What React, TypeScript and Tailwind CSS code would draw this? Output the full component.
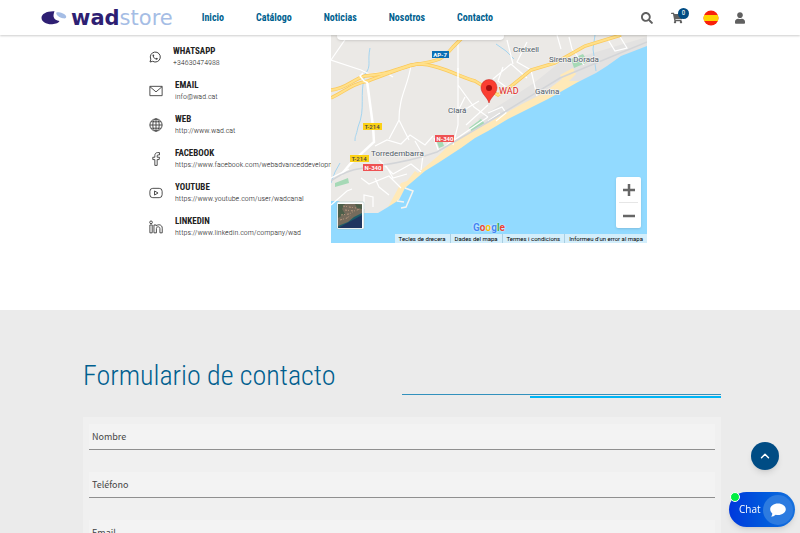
import type { ReactNode } from "react";
import { FaSearch, FaShoppingCart, FaUser } from "react-icons/fa";
import { ChevronUp } from "lucide-react";

const navLinks = ["Inicio", "Catálogo", "Noticias", "Nosotros", "Contacto"];

const fields = [
  { id: "nombre", label: "Nombre", type: "text" },
  { id: "telefono", label: "Teléfono", type: "tel" },
  { id: "email", label: "Email", type: "email" },
];

function LineIcon({ className, children }: { className: string; children: ReactNode }) {
  return (
    <svg
      viewBox="0 0 24 24"
      className={className}
      fill="none"
      stroke="#444"
      strokeWidth="1.6"
      strokeLinejoin="round"
      aria-hidden="true"
    >
      {children}
    </svg>
  );
}

const contacts = [
  {
    title: "WHATSAPP",
    value: "+34630474988",
    href: "tel:+34630474988",
    icon: (
      <LineIcon className="w-3 h-3">
        <path strokeWidth="2" d="M2 22l1.6-5.6A10 10 0 1 1 7.4 20.600z" />
        <path
          fill="#444"
          stroke="none"
          d="M8.600 6.500c-1.300.6-1.900 2-1.400 3.700 1.200 3.600 4 6.200 7.400 7.200 1.700.4 3.100-.6 3.300-2.300l-3-1.600-1.500 1.500c-1.900-.8-3.100-2-4-3.800l1.300-1.500z"
        />
      </LineIcon>
    ),
  },
  {
    title: "EMAIL",
    value: "info@wad.cat",
    href: "mailto:info@wad.cat",
    icon: (
      <LineIcon className="w-3.5 h-3.5">
        <path d="M1.500 4h21v16h-21zM1.500 4.500L12 13.500l10.500-9" />
      </LineIcon>
    ),
  },
  {
    title: "WEB",
    value: "http://www.wad.cat",
    href: "http://www.wad.cat",
    icon: (
      <LineIcon className="w-3.5 h-3.5">
        <circle cx="12" cy="12" r="10.500" />
        <ellipse cx="12" cy="12" rx="5.500" ry="10.500" />
        <path d="M12 1.500v21M1.500 12h21M3.500 6.500h17M3.500 17.500h17" />
      </LineIcon>
    ),
  },
  {
    title: "FACEBOOK",
    value: "https://www.facebook.com/webadvanceddevelopment",
    href: "https://www.facebook.com/webadvanceddevelopment",
    icon: (
      <LineIcon className="w-3.5 h-3.5">
        <path d="M10 23V13H6.500V9H10V6c0-3 1.800-5 4.800-5H18v4h-2.400C14.400 5 14 5.600 14 6.800V9h4l-.6 4H14v10z" />
      </LineIcon>
    ),
  },
  {
    title: "YOUTUBE",
    value: "https://www.youtube.com/user/wadcanal",
    href: "https://www.youtube.com/user/wadcanal",
    icon: (
      <LineIcon className="w-3.5 h-3.5">
        <rect x="1.500" y="4" width="21" height="16" rx="5" />
        <path d="M9.500 8.500v7l6-3.500z" />
      </LineIcon>
    ),
  },
  {
    title: "LINKEDIN",
    value: "https://www.linkedin.com/company/wad",
    href: "https://www.linkedin.com/company/wad",
    icon: (
      <LineIcon className="w-3.5 h-3.5">
        <circle cx="3.500" cy="4" r="2.300" />
        <path d="M1.500 8.500h4V22h-4zM8.500 8.500h4v1.800c2.600-3.600 10.200-2.800 10.200 3.700v8h-4v-7.500c0-3.800-6-3.800-6 0V22H8.500z" />
      </LineIcon>
    ),
  },
];

function Logo() {
  return (
    <a href="#" className="flex items-center gap-1" aria-label="wadstore">
      <svg viewBox="0 0 26 16" className="w-[26px] h-4" aria-hidden="true">
        <path
          fill="#2e1f73"
          d="M13.500 1.200C6 .8.500 3.800.5 7.700c0 4.200 5.300 6.800 10.700 6.500 3.900-.2 6.500-1.500 7.300-3.200-2.800-.4-5.400-1.700-5.900-4.200-.3-2 .3-4 .9-5.600z"
        />
        <path
          fill="#a5bde5"
          d="M15.400 2.400c2.800-.6 8 .9 9.500 3.400 1 1.800-.3 3-2.900 2.500-3.200-.6-7.600-3.500-6.600-5.900z"
        />
      </svg>
      <span className="font-['DejaVu_Sans',sans-serif] text-[21px] leading-6 text-[#a5bde5]">
        <span className="font-bold text-[#2e1f73]">wad</span>store
      </span>
    </a>
  );
}

function SpainFlag() {
  return (
    <svg viewBox="0 0 16 16" className="w-4 h-4" aria-hidden="true">
      <clipPath id="flag">
        <circle cx="8" cy="8" r="7.500" />
      </clipPath>
      <g clipPath="url(#flag)">
        <rect width="16" height="16" fill="#f8210b" />
        <rect y="5" width="16" height="6" fill="#ffd400" />
      </g>
    </svg>
  );
}

function Header() {
  return (
    <header className="relative z-10 flex h-[35px] shrink-0 items-center bg-white pl-[41px] pr-[55px] shadow-[0_1px_2px_rgba(0,0,0,0.2)]">
      <Logo />
      <nav className="ml-[29px] flex gap-8 text-[10px] leading-4 font-bold text-[#005f8f]">
        {navLinks.map((link) => (
          <a key={link} href="#">
            {link}
          </a>
        ))}
      </nav>
      <div className="ml-auto flex items-center text-[#606060]">
        <button type="button" aria-label="Buscar">
          <FaSearch className="w-3 h-3" />
        </button>
        <button type="button" aria-label="Carrito" className="relative ml-[18px]">
          <FaShoppingCart className="w-3 h-3" />
          <span className="absolute -top-1 left-[7px] flex h-[11px] w-[11px] items-center justify-center rounded-full bg-[#004c84] text-[7px] leading-none text-white">
            0
          </span>
        </button>
        <button type="button" aria-label="Idioma" className="ml-5">
          <SpainFlag />
        </button>
        <button type="button" aria-label="Mi cuenta" className="ml-4">
          <FaUser className="w-[10px] h-3" />
        </button>
      </div>
    </header>
  );
}

function MapDrawing() {
  return (
    <svg
      viewBox="0 0 316 208"
      preserveAspectRatio="xMidYMid slice"
      className="block h-full w-full font-['Roboto',sans-serif]"
      role="img"
      aria-label="Mapa"
    >
      <rect width="316" height="208" fill="#ebe9e6" />

      {/* built-up areas and parks */}
      <path fill="#e3e2e1" d="M147 84l56-36 25-20 88-26v12l-52 26-36 14-38 24-32 16z" />
      <path fill="#a6d9b6" d="M138 93l12-9 4 5-12 9zM240 24l12-5 5 8-14 6zM4 148l13-5 1 5-14 4zM106 107l5-2 2 6-5 2z" />

      {/* beach */}
      <path
        fill="#ffe9b8"
        d="M70 148l6-2 8-10 3 2 20-17 14-14 36-19 34-19 20-10 20-15-2-4 13-7 3 6-7 7 12 0-20 12-33 19-40 20-20 13-27 18-34 24-9 13-6 10-4-3z"
      />
      <path
        fill="#92daff"
        d="M316 11l-26 10-14 10-11 7-18 9-30 17-40 20-20 12-13 7-14 10-23 15-13 8-20 17-6 12-11 7-10 6H33l-10-4-16-8H0v43h316z"
      />

      {/* streams */}
      <path
        fill="none"
        stroke="#a5d5f0"
        d="M39 13c-3 14 2 18-5 26-6 22 1 34-7 53-2 10-3 8-3 14M0 148l4-11 5-9M165 9l10 7 8 8M264 0l-2 14 3 22"
      />

      {/* streets */}
      <g fill="none" stroke="#fff" strokeWidth="1.200">
        <path d="M0 25l30 10 8 4 16-2 8 5M0 25l20-29M80 30c-3 22-12 30-12 55l-10 19M68 85l10 20M127 5v85l-5 20M127 50l16 22 14 10M128 78l20-12M157 82l-38 26" />
        <path d="M157 70l-22 20M134 62l-8 16M162 44l18-15 16 14M176 5l6 24M200 35l-14-8 10-20M200 35l6 26M172 32l-5 14 8 6M157 78l14-6 4 6-10 8M157 86l12-8M226 0l4 14M238 2l3 12 12 16M276 3l8 13 12-3-8-13" />
        <path d="M44 111l12-6 14 4 9-9 15 10 8-9M48 125l14 14 18-10 10 8M30 143l8 6 20-8 12 12M76 139l-14 4-8-14M84 106l8 14-2 15M103 103l5 14M114 112l8-8M0 143l18-9M0 170l16-14 5-2M33 174v-14l9 2v10M58 160l-10-8-4-9" />
        <path strokeWidth="2.500" d="M36 46l6 45 1 16-24 22-9 11" />
      </g>

      {/* harbour */}
      <path fill="none" stroke="#f7f4ef" strokeWidth="1.500" d="M74 153l8 3-7 16-5 1M66 166l7 1" />

      {/* railway */}
      <path fill="none" stroke="#d3d5d8" strokeWidth="1.500" d="M0 146c20-14 32-12 46-15 28-4 46-9 60-14l51-30 72-44L316 7" />

      {/* motorway */}
      <g fill="none" stroke="#fbc95c" strokeWidth="3.500">
        <path d="M0 55c15-1 22-11 34-14 24-2 26-5 46-11 30-4 32-6 42-18L134 0" />
        <path d="M0 63c15-7 20-14 37-17 22-8 40-16 50-17 20 0 42 13 57 17l13 8 10 6 12-8 21-17 24-7 30-17 36-11" />
      </g>
      <g fill="none" stroke="#ffe08a" strokeWidth="2">
        <path d="M0 55c15-1 22-11 34-14 24-2 26-5 46-11 30-4 32-6 42-18L134 0" />
        <path d="M0 63c15-7 20-14 37-17 22-8 40-16 50-17 20 0 42 13 57 17l13 8 10 6 12-8 21-17 24-7 30-17 36-11" />
      </g>
      <path fill="none" stroke="#fff" strokeWidth="1.500" d="M127 33v10M32 38l-3 3 4 5 4 2" />

      {/* road shields */}
      <g fontSize="6" fontWeight="700" textAnchor="middle">
        <rect x="101" y="16" width="17" height="7" fill="#0b6fb5" />
        <text x="109" y="22" fill="#fff">AP-7</text>
        <rect x="32" y="88" width="19" height="7" fill="#fcd116" />
        <text x="41" y="94" fill="#444" fontWeight="500">T-214</text>
        <rect x="19" y="120" width="19" height="7" fill="#fcd116" />
        <text x="28" y="126" fill="#444" fontWeight="500">T-214</text>
        <rect x="104" y="100" width="19" height="7" fill="#ee5253" />
        <text x="114" y="106" fill="#fff">N-340</text>
        <rect x="32" y="129" width="20" height="7" fill="#ee5253" />
        <text x="42" y="135" fill="#fff">N-340</text>
      </g>

      {/* place names */}
      <g fontSize="8" fill="#505c69" stroke="#f3f2f0" strokeWidth="1.500" paintOrder="stroke">
        <text x="182" y="17">Creixell</text>
        <text x="218" y="27">Sirena Dorada</text>
        <text x="204" y="59">Gavina</text>
        <text x="117" y="78">Clará</text>
        <text x="40" y="121">Torredembarra</text>
        <text x="168" y="59" fontSize="9" fill="#e0251b">WAD</text>
      </g>

      {/* pin */}
      <path
        fill="#fa3e31"
        stroke="#c5221f"
        strokeWidth="0.500"
        d="M158 68c-1.500-6-8-9-8-15.500a8 8 0 0 1 16 0C166 59 159.500 62 158 68z"
      />
      <circle cx="158" cy="53" r="3" fill="#a50e0e" />

      {/* satellite thumbnail */}
      <rect x="6" y="167" width="27" height="27" rx="1" fill="#fff" stroke="#9bb" strokeWidth="0.500" />
      <rect x="7" y="169" width="24" height="24" fill="#1f3560" />
      <path fill="#1d5c68" d="M7 169h24v11l-11 6-13 7z" />
      <path fill="#756b5c" d="M7 169h24v9l-8 4-6 5-10 4z" />
      <path fill="#4c5f4a" d="M7 169h7l-3 5 3 5-7 4zM24 169l7 1v4l-5-1z" />
      <path
        stroke="#b8977e"
        strokeWidth="1"
        strokeDasharray="2 1 1 2"
        fill="none"
        d="M12 171l6 1 7 1M14 175l9 1 6-2M10 180l8-1 4-2M9 185l7-2 4-3"
      />
    </svg>
  );
}

function GoogleMark() {
  return (
    <span className="font-['Roboto',sans-serif] text-[10px] leading-3 font-bold [text-shadow:0_0_2px_#fff]">
      <span className="text-[#4285f4]">G</span>
      <span className="text-[#ea4335]">o</span>
      <span className="text-[#fbbc05]">o</span>
      <span className="text-[#4285f4]">g</span>
      <span className="text-[#34a853]">l</span>
      <span className="text-[#ea4335]">e</span>
    </span>
  );
}

function ContactMap() {
  return (
    <div className="relative h-[208px] min-w-0 flex-1 overflow-hidden">
      <MapDrawing />
      <div className="absolute top-0 left-[6px] h-[5px] w-[167px] rounded-b-sm bg-white shadow" />
      <div className="absolute right-[6px] bottom-[15px] flex w-[25px] flex-col items-center rounded-xs bg-white text-[#666] shadow">
        <button type="button" aria-label="Ampliar" className="flex h-[25px] w-full items-center justify-center">
          <svg viewBox="0 0 12 12" className="h-3 w-3" stroke="currentColor" strokeWidth="2.500">
            <path d="M0 6h12M6 0v12" />
          </svg>
        </button>
        <span className="h-px w-[19px] bg-[#e6e6e6]" />
        <button type="button" aria-label="Reducir" className="flex h-[25px] w-full items-center justify-center">
          <svg viewBox="0 0 12 12" className="h-3 w-3" stroke="currentColor" strokeWidth="2.500">
            <path d="M0 6h12" />
          </svg>
        </button>
      </div>
      <div className="absolute inset-x-0 bottom-[9px] flex h-3 justify-center">
        <GoogleMark />
      </div>
      <div className="absolute right-0 bottom-0 flex h-[9px] items-center divide-x divide-[#a9cfe2] bg-[#d3eefb] font-['Roboto',sans-serif] text-[6px] leading-[9px] whitespace-nowrap text-black">
        <button type="button" className="px-1">Tecles de drecera</button>
        <span className="px-1">Dades del mapa</span>
        <a href="#" className="px-1">Termes i condicions</a>
        <a href="#" className="px-1">Informeu d'un error al mapa</a>
      </div>
    </div>
  );
}

function ContactInfo() {
  return (
    <section className="flex h-[275px] shrink-0 justify-center bg-white pr-1">
      <div className="flex w-full max-w-[498px] items-start">
        <ul className="w-[182px] shrink-0 pt-[10px]">
          {contacts.map((item) => (
            <li key={item.title} className="flex h-[34px] items-start gap-3">
              <span className="mt-[5px] flex h-3.5 shrink-0 items-center">{item.icon}</span>
              <div className="min-w-0 flex-1 overflow-hidden whitespace-nowrap">
                <h3 className="text-[9px] leading-3 font-bold text-[#222]">{item.title}</h3>
                <a href={item.href} className="block text-[8px] leading-3 font-light text-[#222]">
                  {item.value}
                </a>
              </div>
            </li>
          ))}
        </ul>
        <ContactMap />
      </div>
    </section>
  );
}

function ContactForm() {
  return (
    <section className="flex-1 bg-[#ebebeb] pt-[46px] pl-1">
      <div className="mx-auto w-4/5 min-w-[638px]">
        <div className="flex h-[61px] items-start justify-between">
          <h2 className="text-[28px] leading-10 font-light text-[#005f8f]">Formulario de contacto</h2>
          <div className="mt-[38px] flex w-1/2 flex-col items-end">
            <span className="h-px w-full bg-[#3291bd]" />
            <span className="mt-px h-[2px] w-3/5 bg-[#00b4f5]" />
          </div>
        </div>
        <form className="flex flex-col gap-[22px] bg-[#f0f0f0] px-[6px] py-[7px] font-['Noto_Sans_CJK_SC',sans-serif]">
          {fields.map((field) => (
            <input
              key={field.id}
              id={field.id}
              type={field.type}
              aria-label={field.label}
              placeholder={field.label}
              className="h-[26px] w-full border-b border-[#8f8f8f] bg-[#f3f3f3] px-[3px] text-[9px] leading-4 text-[#444] outline-none placeholder:text-[#444]"
            />
          ))}
        </form>
      </div>
    </section>
  );
}

function FloatingButtons() {
  return (
    <div className="fixed right-[5px] bottom-[6px] z-20 flex flex-col items-end gap-[22px]">
      <button
        type="button"
        aria-label="Volver arriba"
        className="mr-4 flex h-7 w-7 items-center justify-center rounded-full bg-[#004c84] text-white shadow-md"
      >
        <ChevronUp className="h-3.5 w-3.5" strokeWidth={2.5} />
      </button>
      <button
        type="button"
        className="relative flex h-[35px] w-[66px] items-center justify-between rounded-full bg-linear-to-r from-[#0037dc] to-[#1670dc] pr-[2px] pl-[10px] font-['Open_Sans',sans-serif] text-[10px] text-white shadow-md"
      >
        Chat
        <span className="flex h-[30px] w-[30px] items-center justify-center rounded-full bg-[#2c7be0]">
          <svg viewBox="0 0 16 16" className="h-4 w-4" fill="#fff" aria-hidden="true">
            <path d="M8 1.500c4.300 0 7.800 2.500 7.800 5.700S12.300 13 8 13c-.8 0-1.600-.1-2.300-.3C4.300 14 2.800 14.600 1 14.600c.8-1 1.300-2 1.300-3.200C1 10.300.2 8.900.2 7.200.2 4 3.700 1.500 8 1.500z" />
          </svg>
        </span>
        <span className="absolute top-0 left-[1px] h-[10px] w-[10px] rounded-full border border-white bg-[#00ee42]" />
      </button>
    </div>
  );
}

export default function App() {
  return (
    <div className="flex h-screen flex-col overflow-hidden bg-white font-['Roboto_Condensed','Liberation_Sans_Narrow','Roboto',sans-serif]">
      <Header />
      <ContactInfo />
      <ContactForm />
      <FloatingButtons />
    </div>
  );
}
